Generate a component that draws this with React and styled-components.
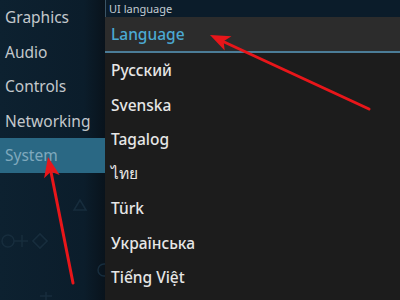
import React from "react";
import styled, { createGlobalStyle } from "styled-components";

const GlobalStyle = createGlobalStyle`
  html, body {
    margin: 0;
    padding: 0;
    background: #0c1e2d;
  }
  body {
    font-family: "Noto Sans", "Open Sans", sans-serif;
  }
`;

const categories = ["Graphics", "Audio", "Controls", "Networking", "System"];
const languages = ["Русский", "Svenska", "Tagalog", "ไทย", "Türk", "Українська", "Tiếng Việt"];

const App = () => {
  return (
    <>
      <GlobalStyle />
      <Screen>
        <Sidebar>
          <Shapes viewBox="0 0 105 300" aria-hidden="true">
            <polygon points="80,200 74,210 86,210" />
            <circle cx="8" cy="241" r="6" />
            <path d="M14 241 H28 M22 235 V247" />
            <rect x="35" y="236" width="10" height="10" transform="rotate(45 40 241)" />
            <circle cx="104" cy="270" r="6" />
            <path d="M46 292 V300 M40 296 H52" />
          </Shapes>
          <CategoryList>
            {categories.map((c) => (
              <Category key={c} active={c === "System"}>
                {c}
              </Category>
            ))}
          </CategoryList>
        </Sidebar>
        <Panel>
          <PanelHeader>UI language</PanelHeader>
          <SelectedRow>Language</SelectedRow>
          <OptionList>
            {languages.map((l) => (
              <Option key={l}>{l}</Option>
            ))}
          </OptionList>
        </Panel>
        <Arrows viewBox="0 0 400 300" aria-hidden="true">
          <line x1="369" y1="109" x2="222" y2="41" />
          <polygon points="210,35 231.5,36.2 223.6,41.3 224.7,50.6" />
          <line x1="73" y1="283" x2="51" y2="172" />
          <polygon points="48,157 59.7,175 50.9,171.7 44.1,178.2" />
        </Arrows>
      </Screen>
    </>
  );
};

const Screen = styled.div`
  position: relative;
  width: 400px;
  height: 300px;
  display: flex;
  overflow: hidden;
`;

const Sidebar = styled.div`
  position: relative;
  width: 105px;
  flex-shrink: 0;
  background: linear-gradient(to right, #0d2130 0%, #0b1d2b 80%, #09131c 100%);
`;

const Shapes = styled.svg`
  position: absolute;
  inset: 0;
  width: 105px;
  height: 300px;
  fill: none;
  stroke: #172d3d;
  stroke-width: 1.5;
`;

const CategoryList = styled.div`
  position: relative;
  display: flex;
  flex-direction: column;
`;

const Category = styled.div`
  height: 34.5px;
  display: flex;
  align-items: center;
  padding-left: 5px;
  font-size: 15.5px;
  color: ${(p) => (p.active ? "#7fa9bd" : "#c3c8cc")};
  background: ${(p) => (p.active ? "#2a6884" : "transparent")};
`;

const Panel = styled.div`
  flex: 1;
  display: flex;
  flex-direction: column;
  background: #1c1c1c;
`;

const PanelHeader = styled.div`
  height: 17px;
  display: flex;
  align-items: center;
  padding-left: 3px;
  font-size: 11px;
  color: #c4ccd2;
  background: #0b1c2a;
  border-left: 1px solid #3b5566;
`;

const SelectedRow = styled.div`
  height: 34px;
  display: flex;
  align-items: center;
  padding-left: 6px;
  font-size: 15.5px;
  font-weight: 500;
  color: #4ba9d2;
  background: #2c2c2c;
  border-bottom: 2px solid #4b7c97;
`;

const OptionList = styled.div`
  display: flex;
  flex-direction: column;
`;

const Option = styled.div`
  height: 34.5px;
  display: flex;
  align-items: center;
  padding-left: 6px;
  font-size: 15.5px;
  font-weight: 500;
  color: #e6e6e6;
`;

const Arrows = styled.svg`
  position: absolute;
  inset: 0;
  width: 400px;
  height: 300px;
  pointer-events: none;
  line {
    stroke: #e8161a;
    stroke-width: 3;
    stroke-linecap: round;
  }
  polygon {
    fill: #e8161a;
  }
`;

export default App;
